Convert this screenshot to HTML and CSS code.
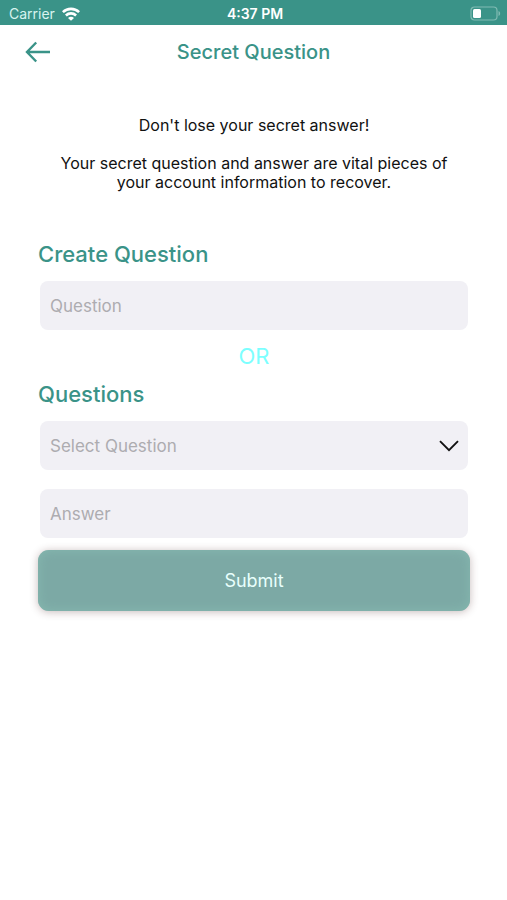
FILE: index.html
```html
<!DOCTYPE html>
<html lang="en">
<head>
<meta charset="utf-8">
<meta name="viewport" content="width=device-width, initial-scale=1">
<title>Secret Question</title>
<link rel="stylesheet" href="styles.css">
</head>
<body>
<div class="status">
  <div class="carrier">
    <span>Carrier</span>
    <svg width="18" height="14" viewBox="0 0 18 14" fill="none" stroke="#fff" stroke-width="2.6" aria-hidden="true">
      <path d="M.9 5.2C5.400.700 12.600.700 17.100 5.200"/>
      <path d="M3.900 8.500C6.800 5.700 11.200 5.700 14.100 8.500"/>
      <path d="M6 10.900C7.700 9.300 10.300 9.300 12 10.900L9 13.800Z" fill="#fff" stroke="none"/>
    </svg>
  </div>
  <span class="time">4:37 PM</span>
  <svg class="battery" width="31" height="15" viewBox="0 0 31 15" fill="none" aria-hidden="true">
    <rect x="1" y="1" width="26" height="13" rx="3.500" stroke="#80bbb3" stroke-width="1.200"/>
    <path d="M28.500 5v5c2.200-.8 2.200-4.200 0-5Z" fill="#80bbb3"/>
    <rect x="3" y="3" width="8" height="9" rx="1.500" fill="#fff"/>
  </svg>
</div>
<header class="header">
  <button class="back" type="button" aria-label="Back">
    <svg width="26" height="22" viewBox="0 0 26 22" fill="none" stroke="#3a9388" stroke-width="2.400" aria-hidden="true">
      <path d="M25 11H2M11.200 1.500 2 11l9.200 9.500"/>
    </svg>
  </button>
  <h1>Secret Question</h1>
</header>
<main>
  <div class="intro">
    <p>Don't lose your secret answer!</p>
    <p>Your secret question and answer are vital pieces of your account information to recover.</p>
  </div>
  <form>
    <label class="title" for="question">Create Question</label>
    <input class="field" id="question" type="text" placeholder="Question">
    <p class="or">OR</p>
    <label class="title" for="questions">Questions</label>
    <div class="picker">
      <select class="field" id="questions">
        <option>Select Question</option>
      </select>
      <svg class="chevron" width="20" height="12" viewBox="0 0 20 12" fill="none" stroke="#111" stroke-width="1.900" aria-hidden="true">
        <path d="M1 1.200 10 10.200 19 1.200"/>
      </svg>
    </div>
    <input class="field answer" type="text" placeholder="Answer" aria-label="Answer">
    <button class="submit" type="submit">Submit</button>
  </form>
</main>
</body>
</html>
```
FILE: styles.css
```css
* {
  box-sizing: border-box;
}

body {
  margin: 0;
  background: #fff;
  color: #111;
  font-family: Inter, "Liberation Sans", sans-serif;
}

h1,
p {
  margin: 0;
}

.status {
  display: grid;
  grid-template-columns: 1fr auto 1fr;
  align-items: center;
  height: 25px;
  padding: 2px 6px 0 9px;
  background: #3a9388;
  color: #fff;
  font-size: 14px;
}

.carrier {
  display: flex;
  align-items: center;
  gap: 7px;
  color: #d8f3ef;
}

.time {
  font-weight: 600;
}

.battery {
  justify-self: end;
}

.header {
  display: grid;
  grid-template-columns: 1fr auto 1fr;
  align-items: center;
  height: 54px;
  padding: 0 25px;
}

.back {
  display: flex;
  justify-self: start;
  padding: 0;
  border: 0;
  background: none;
}

.header h1 {
  color: #3a9388;
  font-size: 20px;
  font-weight: 500;
}

main {
  padding: 37px 37px 24px 38px;
}

.intro {
  display: grid;
  gap: 19px;
  padding: 0 16px;
  font-size: 16px;
  line-height: 19px;
  text-align: center;
}

form {
  display: flex;
  flex-direction: column;
  margin-top: 48px;
}

.title {
  margin-bottom: 12px;
  color: #3a9388;
  font-size: 22px;
  font-weight: 500;
  line-height: 29px;
}

.field {
  height: 49px;
  margin: 0 2px;
  padding: 0 10px;
  border: 0;
  border-radius: 8px;
  background: #f1f0f5;
  color: #111;
  font: 17px Inter, "Liberation Sans", sans-serif;
}

.field::placeholder,
select.field {
  color: #adacb0;
  opacity: 1;
}

.or {
  margin: 12px 0 9px;
  color: #7dffff;
  font-size: 22px;
  line-height: 29px;
  text-align: center;
}

.picker {
  display: grid;
  align-items: center;
}

.picker > * {
  grid-area: 1 / 1;
}

select.field {
  appearance: none;
}

.chevron {
  justify-self: end;
  margin-right: 11px;
  pointer-events: none;
}

.answer {
  margin-top: 19px;
}

.submit {
  height: 61px;
  margin-top: 12px;
  border: 0;
  border-radius: 11px;
  background: #7ca9a5;
  box-shadow: 0 1px 8px rgb(70 30 30 / 30%), inset 0 0 12px #86b9b0;
  color: #e8fffc;
  font: 18px Inter, "Liberation Sans", sans-serif;
}
```
